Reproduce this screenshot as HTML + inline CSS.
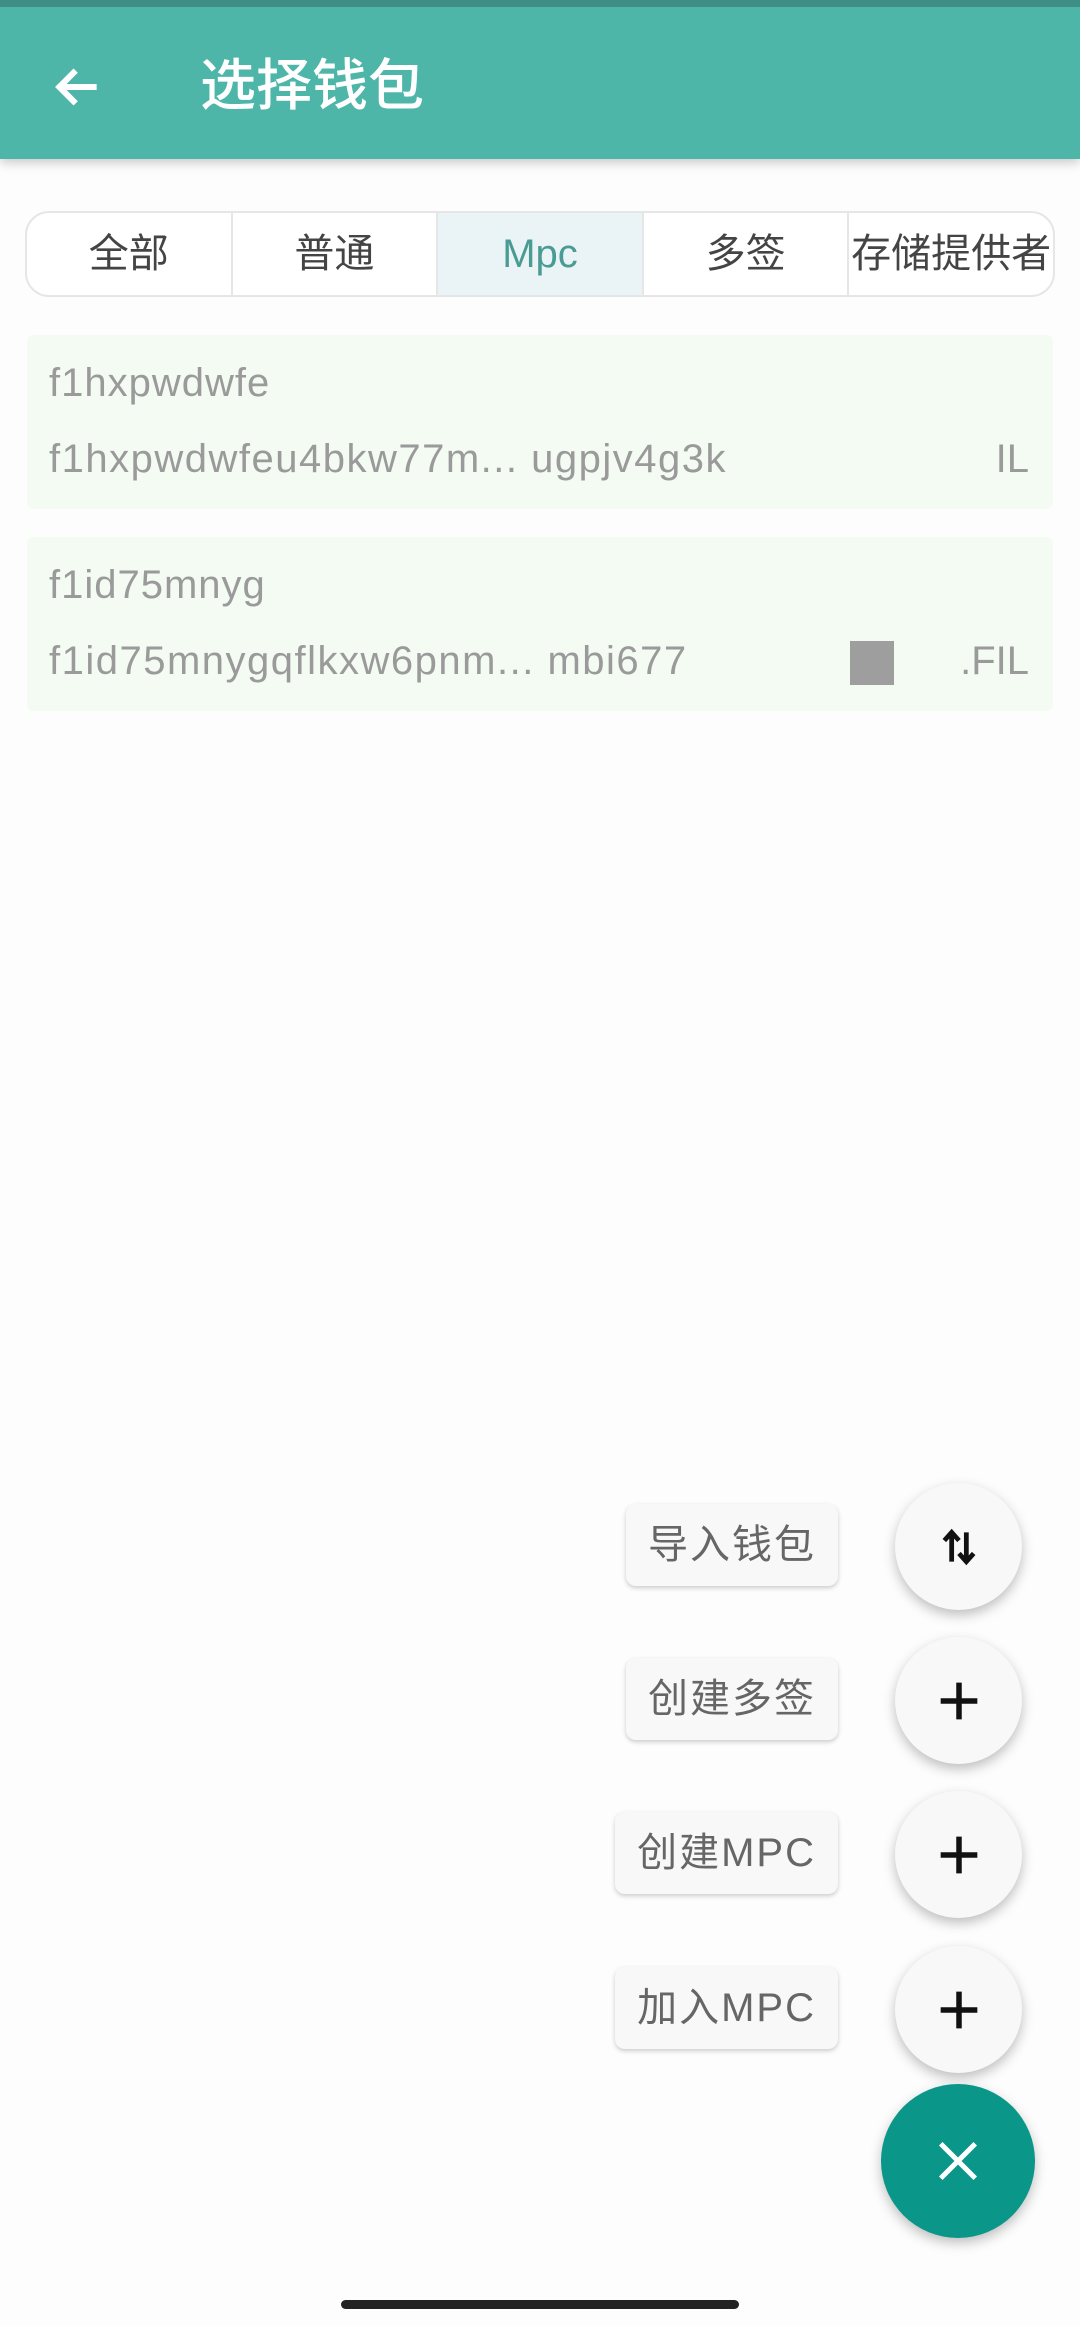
<!DOCTYPE html>
<html><head><meta charset="utf-8"><style>
*{margin:0;padding:0;box-sizing:border-box}
body{width:1080px;height:2326px;background:#fdfdfd;position:relative;overflow:hidden;font-family:"Liberation Sans","Noto Sans CJK SC",sans-serif}
.hdr{position:absolute;left:0;top:0;width:1080px;height:159px;background:#4db6a9;border-top:7px solid #3f8e86;box-shadow:0 4px 10px rgba(0,0,0,.2)}
.title{position:absolute;left:200px;top:46px;font-size:56px;color:#fff;font-weight:500;line-height:66px}
.tabs{position:absolute;left:25px;top:211px;width:1030px;height:86px;border:2px solid #e6e6e6;border-radius:24px;overflow:hidden;display:flex;background:#fff}
.tabs div{flex:1;text-align:center;line-height:82px;font-size:40px;color:#444;border-left:2px solid #e6e6e6;white-space:nowrap;overflow:hidden}
.tabs div:first-child{border-left:none}
.tabs .on{background:#eaf4f6;color:#4a9b94}
.card{position:absolute;left:27px;width:1026px;height:174px;background:#f3fbf3;border-radius:6px;color:#9a9a9a;font-size:40px}
.card .a{position:absolute;left:22px;top:26px;letter-spacing:1px}
.card .b{position:absolute;left:22px;top:102px;white-space:nowrap;letter-spacing:1.5px}
.card .c{position:absolute;right:24px;top:102px}
.fab{position:absolute;left:895px;width:127px;height:127px;border-radius:50%;background:#f8f8f8;box-shadow:0 5px 12px rgba(0,0,0,.25);display:flex;align-items:center;justify-content:center}
.lbl{position:absolute;right:242px;height:82px;background:#f8f8f8;border-radius:10px;box-shadow:0 2px 5px rgba(0,0,0,.2);font-size:40px;color:#666;line-height:82px;padding:0 22px;letter-spacing:2px}
.main{position:absolute;left:881px;top:2084px;width:154px;height:154px;border-radius:50%;background:#0a9688;box-shadow:0 5px 12px rgba(0,0,0,.25);display:flex;align-items:center;justify-content:center}
</style></head><body>
<div class="hdr">
<svg style="position:absolute;left:50px;top:52px" width="56" height="56" viewBox="0 0 24 24"><path d="M20 12H5M11 5l-7 7 7 7" fill="none" stroke="#fff" stroke-width="2.6"/></svg>
<div class="title">选择钱包</div>
</div>
<div class="tabs"><div>全部</div><div>普通</div><div class="on">Mpc</div><div>多签</div><div>存储提供者</div></div>
<div class="card" style="top:335px"><div class="a">f1hxpwdwfe</div><div class="b">f1hxpwdwfeu4bkw77m... ugpjv4g3k</div><div class="c">IL</div></div>
<div class="card" style="top:537px"><div class="a">f1id75mnyg</div><div class="b">f1id75mnygqflkxw6pnm... mbi677</div><div style="position:absolute;left:823px;top:104px;width:44px;height:44px;background:#9e9e9e"></div><div class="c">.FIL</div></div>

<div class="lbl" style="top:1504px">导入钱包</div>
<div class="lbl" style="top:1658px">创建多签</div>
<div class="lbl" style="top:1812px">创建MPC</div>
<div class="lbl" style="top:1967px">加入MPC</div>
<div class="fab" style="top:1483px"><svg width="44" height="44" viewBox="0 0 24 24"><path d="M8 20V5M4 8.5L8 4l4 4.5M16 4v15M12 15.5l4 4.5 4-4.5" fill="none" stroke="#111" stroke-width="2.6"/></svg></div>
<div class="fab" style="top:1637px"><svg width="44" height="44" viewBox="0 0 24 24"><path d="M12 2v20M2 12h20" stroke="#111" stroke-width="3"/></svg></div>
<div class="fab" style="top:1791px"><svg width="44" height="44" viewBox="0 0 24 24"><path d="M12 2v20M2 12h20" stroke="#111" stroke-width="3"/></svg></div>
<div class="fab" style="top:1946px"><svg width="44" height="44" viewBox="0 0 24 24"><path d="M12 2v20M2 12h20" stroke="#111" stroke-width="3"/></svg></div>
<div class="main"><svg width="46" height="46" viewBox="0 0 24 24"><path d="M3 3l18 18M21 3L3 21" stroke="#fff" stroke-width="2.6"/></svg></div>
<div style="position:absolute;left:341px;top:2300px;width:398px;height:9px;border-radius:5px;background:#222"></div>
</body></html>
